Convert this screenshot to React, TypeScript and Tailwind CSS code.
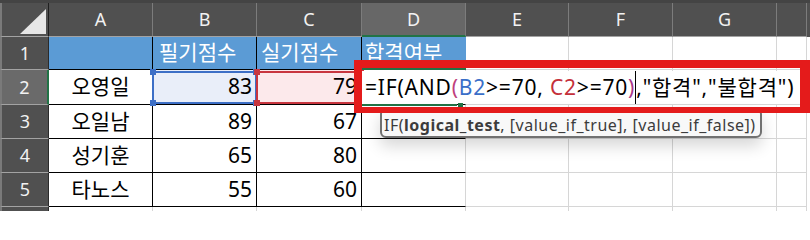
const grid = "border-r border-b border-[#d6d6d6]";
const blk = "border-r border-b border-black";

function RowHead({ n, active, h }: { n: string; active?: boolean; h: string }) {
  return (
    <div
      className={`${h} w-[49px] shrink-0 flex items-center justify-center border-l-2 border-l-[#7a7a7a] border-b border-b-[#a3a3a3] text-[18px] text-[#f2f2f2] ${
        active ? "bg-[#6a6a6a] border-r-2 border-r-[#217346]" : "bg-[#505050] border-r border-r-[#2a2a2a]"
      }`}
    >
      {n}
    </div>
  );
}

function Corners({ color }: { color: string }) {
  return (
    <>
      <span className={`absolute -left-[4px] -top-[4px] w-[6px] h-[6px] ${color}`} />
      <span className={`absolute -right-[4px] -top-[4px] w-[6px] h-[6px] ${color}`} />
      <span className={`absolute -left-[4px] -bottom-[4px] w-[6px] h-[6px] ${color}`} />
      <span className={`absolute -right-[4px] -bottom-[4px] w-[6px] h-[6px] ${color}`} />
    </>
  );
}

function Tail({ h }: { h: string }) {
  return (
    <>
      <div className={`${h} w-[103px] shrink-0 ${grid}`} />
      <div className={`${h} w-[104px] shrink-0 ${grid}`} />
      <div className={`${h} w-[104px] shrink-0 ${grid}`} />
      <div className={`${h} w-[30px] shrink-0 ${grid}`} />
    </>
  );
}

function DataRow({ n, name, b, c }: { n: string; name: string; b: string; c: string }) {
  const h = "h-[34px]";
  return (
    <div className="flex">
      <RowHead n={n} h={h} />
      <div className={`${h} w-[104px] shrink-0 flex items-center justify-center ${blk}`}>{name}</div>
      <div className={`${h} w-[104px] shrink-0 flex items-center justify-end pr-[4px] ${blk}`}>{b}</div>
      <div className={`${h} w-[105px] shrink-0 flex items-center justify-end pr-[4px] ${blk}`}>{c}</div>
      <div className={`${h} w-[104px] shrink-0 border-b border-black border-r border-r-[#d6d6d6]`} />
      <Tail h={h} />
    </div>
  );
}

export default function App() {
  return (
    <div className="relative w-[810px] h-[211px] overflow-hidden bg-white text-black text-[21px] font-['Noto_Sans','Noto_Sans_CJK_KR',sans-serif]">
      {/* column headers */}
      <div className="flex h-[37px] border-t-[3px] border-t-[#444444] bg-[#505050] text-[18px] text-[#f2f2f2]">
        <div className="relative w-[49px] shrink-0 border-l-2 border-l-[#7a7a7a] border-r border-r-[#1f1f1f] border-b border-b-[#a3a3a3]">
          <svg className="absolute left-0 top-0" width="47" height="33">
            <polygon points="18,31 44,31 44,6" fill="#e6e6e6" />
          </svg>
        </div>
        {[
          ["A", "w-[104px]"],
          ["B", "w-[104px]"],
          ["C", "w-[105px]"],
        ].map(([l, w]) => (
          <div key={l} className={`${w} shrink-0 flex items-center justify-center border-r border-r-[#7c7c7c] border-b border-b-[#a3a3a3]`}>
            {l}
          </div>
        ))}
        <div className="w-[104px] shrink-0 flex items-center justify-center bg-[#676767] border-r border-r-[#7c7c7c] border-b-2 border-b-[#217346]">
          D
        </div>
        {[
          ["E", "w-[103px]"],
          ["F", "w-[104px]"],
          ["G", "w-[104px]"],
          ["", "w-[30px]"],
        ].map(([l, w]) => (
          <div key={w + l} className={`${w} shrink-0 flex items-center justify-center border-r border-r-[#7c7c7c] border-b border-b-[#a3a3a3]`}>
            {l}
          </div>
        ))}
      </div>

      {/* row 1 */}
      <div className="flex">
        <RowHead n="1" h="h-[33px]" />
        <div className={`h-[33px] w-[104px] shrink-0 bg-[#5b9bd5] ${blk}`} />
        <div className={`h-[33px] w-[104px] shrink-0 bg-[#5b9bd5] text-white flex items-center pl-[6px] ${blk}`}>필기점수</div>
        <div className={`h-[33px] w-[105px] shrink-0 bg-[#5b9bd5] text-white flex items-center pl-[4px] ${blk}`}>실기점수</div>
        <div className="h-[33px] w-[104px] shrink-0 bg-[#5b9bd5] text-white flex items-center pl-[3px] border-b border-black">합격여부</div>
        <Tail h="h-[33px]" />
      </div>

      {/* row 2 */}
      <div className="flex">
        <RowHead n="2" h="h-[35px]" active />
        <div className={`h-[35px] w-[104px] shrink-0 flex items-center justify-center ${blk}`}>오영일</div>
        <div className={`relative h-[35px] w-[104px] shrink-0 flex items-center justify-end pr-[4px] bg-[#e9eef9] ${blk}`}>
          83
          <div className="absolute left-[-1px] top-[1px] w-[105px] h-[33px] border-2 border-[#3d6fc6]">
            <Corners color="bg-[#3d6fc6]" />
          </div>
        </div>
        <div className={`relative h-[35px] w-[105px] shrink-0 flex items-center justify-end pr-[4px] bg-[#fce9eb] ${blk}`}>
          79
          <div className="absolute left-[-1px] top-[1px] w-[106px] h-[33px] border-2 border-[#c8363f]">
            <Corners color="bg-[#c8363f]" />
          </div>
        </div>
        <div className="h-[35px] w-[104px] shrink-0 border-b border-black border-r border-r-[#d6d6d6]" />
        <Tail h="h-[35px]" />
      </div>

      <DataRow n="3" name="오일남" b="89" c="67" />
      <DataRow n="4" name="성기훈" b="65" c="80" />
      <DataRow n="5" name="타노스" b="55" c="60" />

      {/* row 6 (only its top edge shows) */}
      <div className="flex">
        <RowHead n="" h="h-[34px]" />
        <div className={`h-[34px] w-[104px] shrink-0 ${grid}`} />
        <div className={`h-[34px] w-[104px] shrink-0 ${grid}`} />
        <div className={`h-[34px] w-[105px] shrink-0 ${grid}`} />
        <div className={`h-[34px] w-[104px] shrink-0 ${grid}`} />
        <Tail h="h-[34px]" />
      </div>

      {/* D2 in edit mode */}
      <div className="absolute left-[362px] top-[68px] w-[104px] h-[2px] bg-[#217346]" />
      <div className="absolute left-[362px] top-[71px] w-[438px] h-[33px] bg-white flex items-center pl-[3px] text-[21px] tracking-[0.8px] whitespace-nowrap">
        <span>=IF(AND</span>
        <span className="text-[#c0407c]">(</span>
        <span className="text-[#3a6fc8]">B2</span>
        <span>&gt;=70,&nbsp;</span>
        <span className="text-[#c4303a]">C2</span>
        <span>&gt;=70</span>
        <span className="text-[#a8388a]">)</span>
        <span className="inline-block w-px h-[33px] bg-black" />
        <span>,"합격","불합격")</span>
      </div>
      <div className="absolute left-[362px] top-[104px] w-[95px] h-[2px] bg-[#217346]" />
      <div className="absolute left-[458px] top-[103px] w-[5px] h-[5px] bg-[#217346]" />

      {/* function tooltip */}
      <div className="absolute left-[380px] top-[108px] w-[382px] h-[30px] rounded-[6px] border-2 border-[#717171] bg-[#f8f8f8] shadow-[0_8px_16px_rgba(0,0,0,0.16)] flex items-center pl-[2px] pt-[4px] text-[16px] tracking-[0.5px] text-[#3c3c3c] whitespace-nowrap">
        IF(<b className="font-bold">logical_test</b>, [value_if_true], [value_if_false])
      </div>

      {/* red annotation box */}
      <div className="absolute left-[354px] top-[60px] w-[456px] h-[53px] border-t-8 border-l-8 border-r-[10px] border-b-[6px] border-[#e41b1b]" />
    </div>
  );
}
